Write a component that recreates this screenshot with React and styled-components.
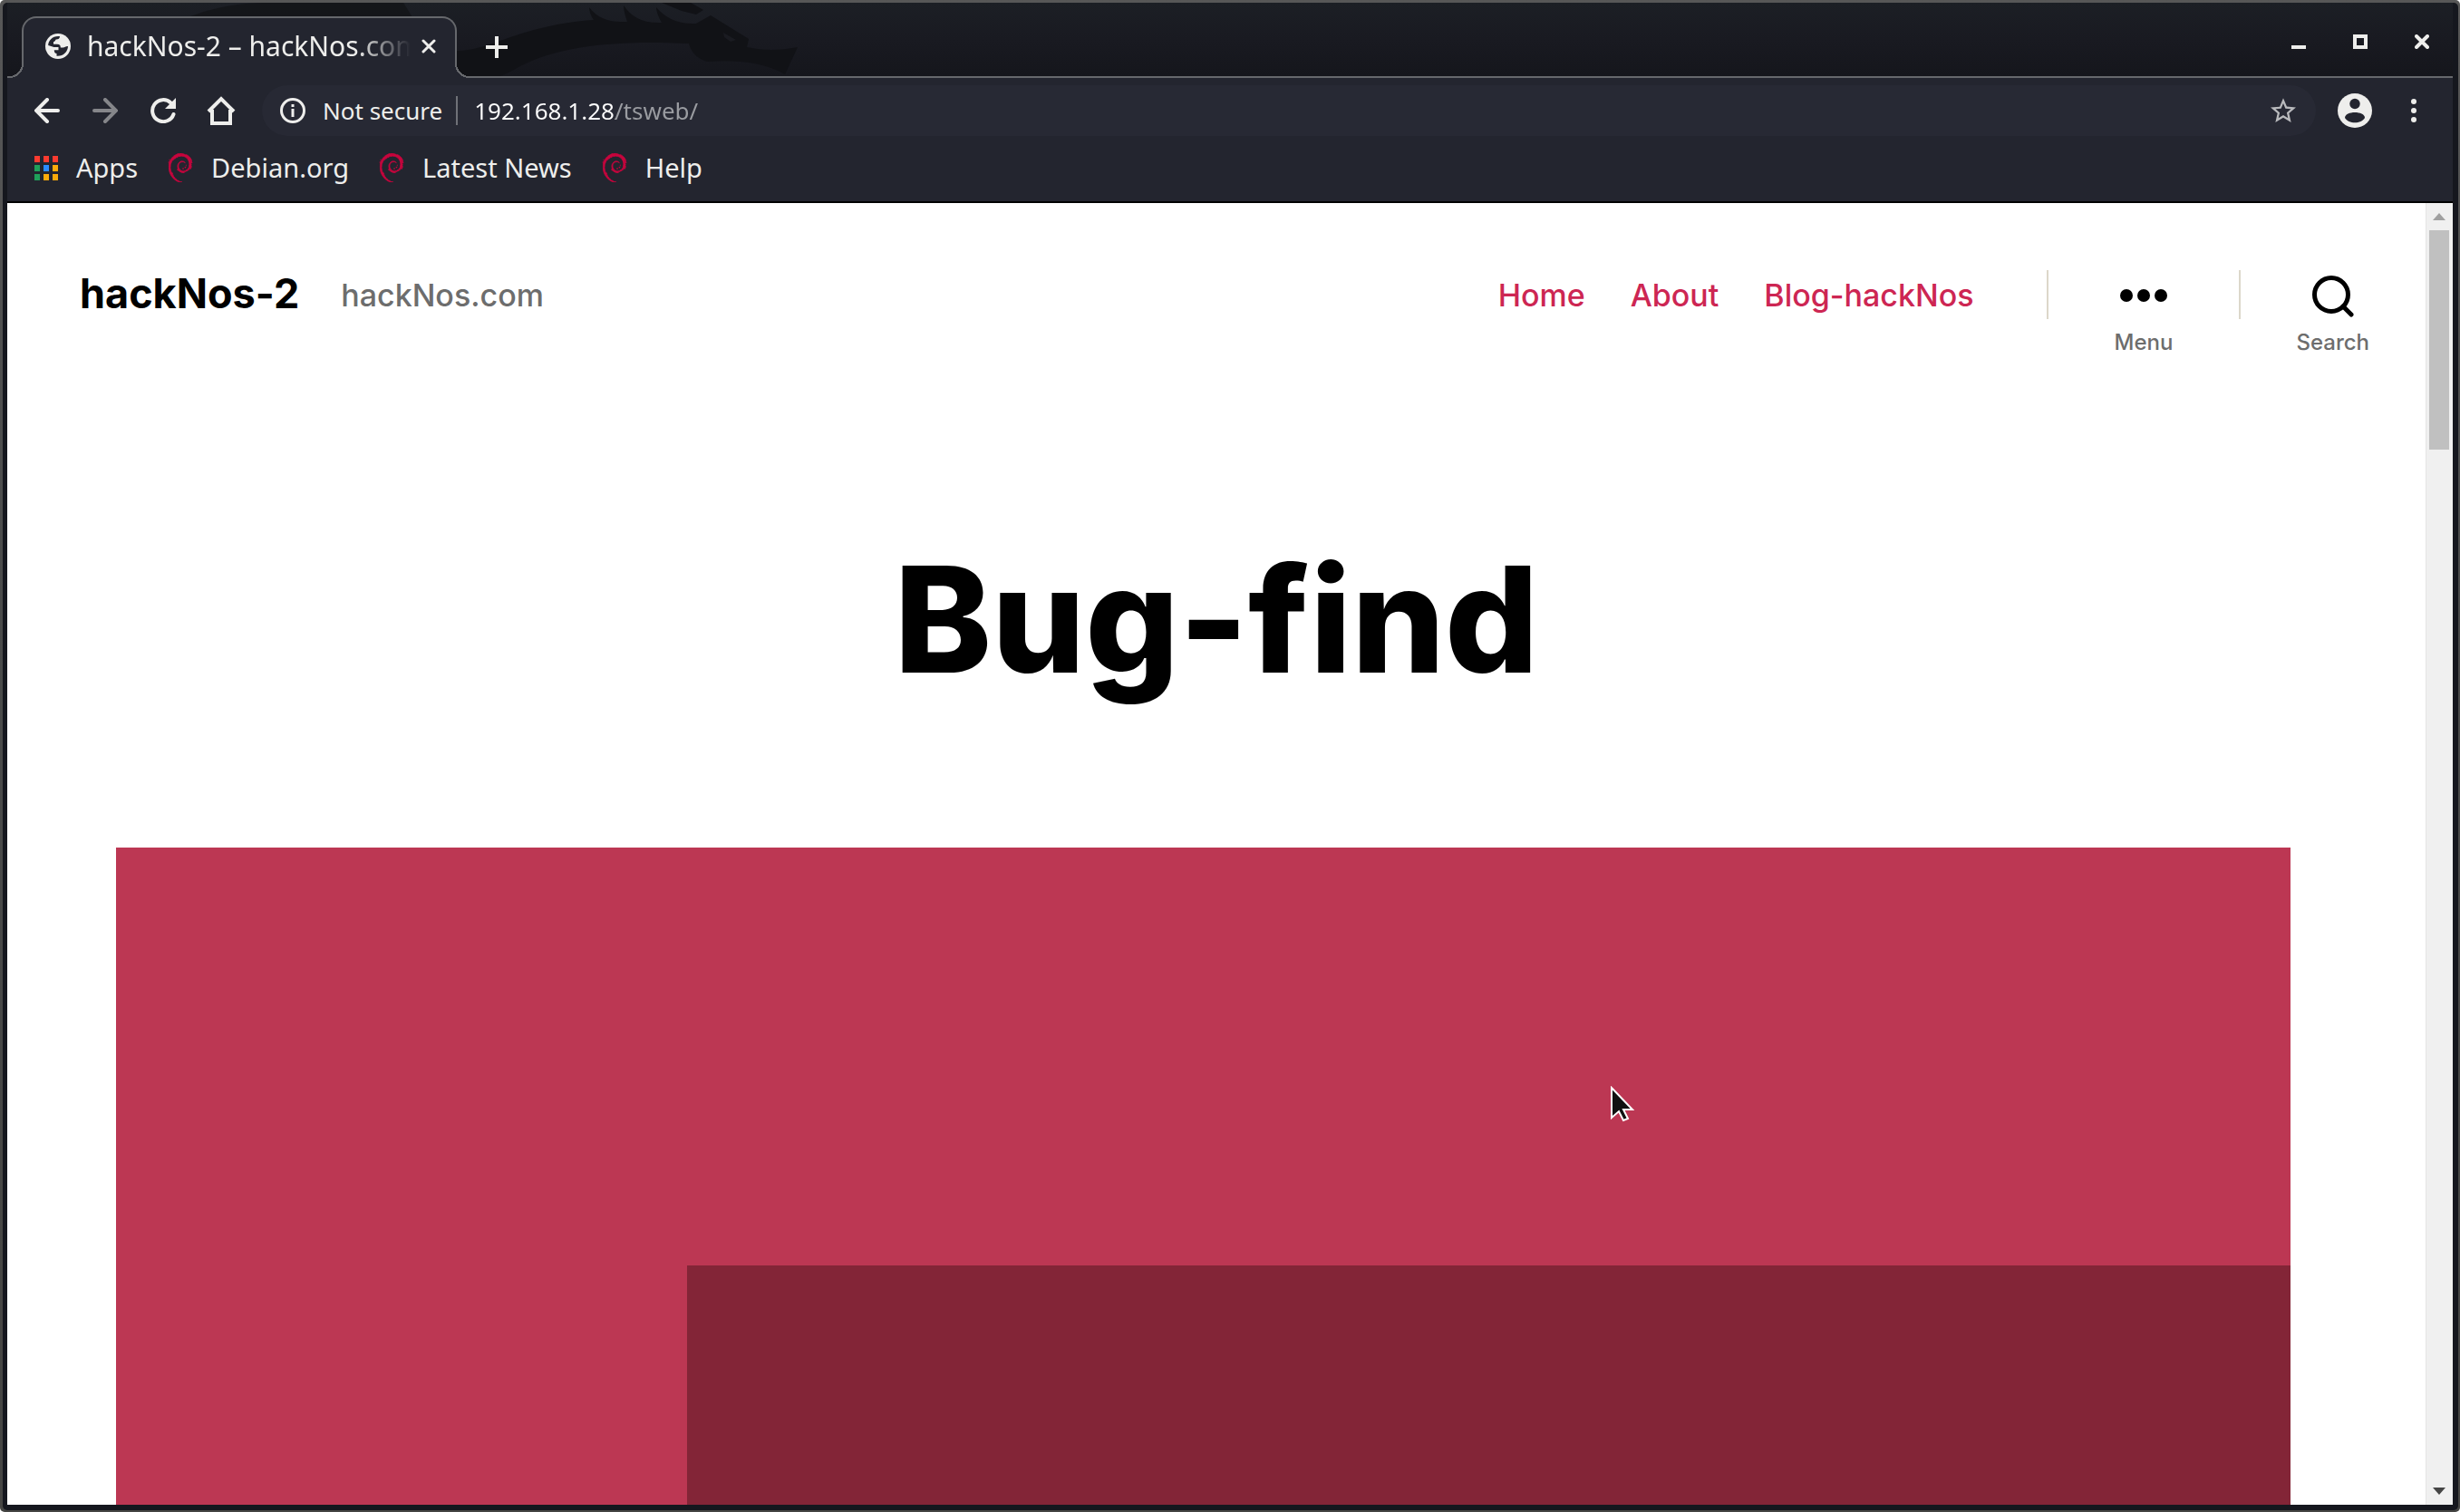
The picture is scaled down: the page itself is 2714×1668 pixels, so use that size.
import React from "react";
import styled, { createGlobalStyle, css } from "styled-components";
import { SiDebian } from "react-icons/si";

const chromeFont = `"Noto Sans", "Open Sans", sans-serif`;
const pageFont = `Inter, "Liberation Sans", sans-serif`;
const c = {
  toolbar: "#23252f",
  line: "#66686c",
  icon: "#eeeeec",
  accent: "#cd2653",
};

const GlobalStyle = createGlobalStyle`
  *, *::before, *::after { box-sizing: border-box; }
  body { margin: 0; background: #fff; }
  button, input { font: inherit; color: inherit; background: none; border: 0; padding: 0; margin: 0; }
  a { color: inherit; text-decoration: none; }
  svg { display: block; flex: none; }
`;

const Frame = styled.div`
  height: 100vh;
  padding: 3px 2px 2px 3px;
  border-radius: 5px;
  background: linear-gradient(#575757, #4a4b4b 40%, #454543);
`;

const Window = styled.div`
  height: 100%;
  display: flex;
  flex-direction: column;
  padding: 0 6px 6px 5px;
  border-radius: 5px;
  background: #15171e;
  font-family: ${chromeFont};
  color: ${c.icon};
`;

const TabStrip = styled.div`
  position: relative;
  flex: none;
  height: 83px;
  display: flex;
  align-items: flex-end;
  padding-left: 16px;
  background: linear-gradient(#1c1f25, #191a21 50%, #15161c);
  border-bottom: 2px solid ${c.line};
`;

const Dragon = styled.svg`
  position: absolute;
  left: 0;
  top: 0;
`;

const flare = css`
  content: "";
  position: absolute;
  bottom: 0;
  width: 16px;
  height: 16px;
`;

const Tab = styled.div`
  position: relative;
  width: 480px;
  height: 68px;
  margin-bottom: -2px;
  display: flex;
  align-items: center;
  padding: 0 21px 4px 24px;
  background: ${c.toolbar};
  border: 2px solid ${c.line};
  border-bottom: 0;
  border-radius: 16px 16px 0 0;
  &::before {
    ${flare}
    right: 100%;
    background: radial-gradient(circle at 0 0, transparent 14px, ${c.line} 14px 16px, ${c.toolbar} 16px);
  }
  &::after {
    ${flare}
    left: 100%;
    background: radial-gradient(circle at 100% 0, transparent 14px, ${c.line} 14px 16px, ${c.toolbar} 16px);
  }
`;

const TabTitle = styled.button`
  flex: 1;
  min-width: 0;
  display: flex;
  align-items: center;
  gap: 18px;
  font-size: 30px;
  line-height: 40px;
  text-align: left;
`;

const TabText = styled.span`
  flex: 1;
  min-width: 0;
  margin-right: 12px;
  white-space: nowrap;
  mask-image: linear-gradient(90deg, #000 calc(100% - 60px), transparent);
`;

const IconButton = styled.button`
  flex: none;
  width: ${(p) => p.$w || 32}px;
  height: 40px;
  display: flex;
  align-items: center;
  justify-content: center;
  color: ${(p) => (p.$dim ? "#85868a" : c.icon)};
`;

const NewTab = styled(IconButton)`
  position: relative;
  margin: 0 0 12px 28px;
`;

const WindowButtons = styled.div`
  position: relative;
  display: flex;
  gap: 36px;
  margin: 0 18px 18px auto;
`;

const Toolbar = styled.div`
  flex: none;
  height: 72px;
  display: flex;
  align-items: center;
  gap: 32px;
  padding: 0 29px 0 28px;
  background: ${c.toolbar};
`;

const AddressBar = styled.label`
  flex: 1;
  height: 56px;
  display: flex;
  align-items: center;
  margin: 0 -8px 0 -3px;
  padding: 0 20px;
  border-radius: 28px;
  background: #272934;
  font-size: 26px;
  line-height: 36px;
`;

const Security = styled.span`
  padding: 0 15px 0 19px;
  border-right: 2px solid #6f7178;
  line-height: 32px;
`;

const Address = styled.input`
  flex: 1;
  min-width: 0;
  height: 40px;
  margin-left: 18px;
  outline: 0;
  background: linear-gradient(90deg, #ffffff 156px, #9a9ca1 156px);
  background-clip: text;
  -webkit-text-fill-color: transparent;
`;

const Bookmarks = styled.nav`
  flex: none;
  height: 66px;
  display: flex;
  align-items: flex-start;
  gap: 31px;
  padding: 7px 28px 0;
  background: ${c.toolbar};
  border-bottom: 2px solid #000;
  font-size: 29px;
  line-height: 40px;
`;

const Bookmark = styled.a`
  display: flex;
  align-items: center;
  gap: 18px;
`;

const AppsGrid = styled.span`
  display: grid;
  grid-template-columns: repeat(3, 6px);
  grid-auto-rows: 7px;
  gap: 3px 4px;
  margin: 0 2px;
`;

const AppDot = styled.span`
  background: ${(p) => p.$color};
`;

const Viewport = styled.div`
  flex: 1;
  min-height: 0;
  display: flex;
  background: #fff;
  color: #000;
  font-family: ${pageFont};
`;

const Page = styled.div`
  flex: 1;
  min-width: 0;
  display: flex;
  flex-direction: column;
  overflow: hidden;
`;

const Header = styled.header`
  flex: none;
  display: flex;
  align-items: flex-start;
  padding: 72px 62px 0 80px;
`;

const SiteTitle = styled.a`
  font-size: 45px;
  line-height: 56px;
  font-weight: 700;
`;

const Tagline = styled.div`
  margin-left: 46px;
  font-size: 34px;
  line-height: 60px;
  font-weight: 500;
  color: #6d6d6d;
`;

const Menu = styled.nav`
  display: flex;
  gap: 50px;
  margin: 0 80px 0 auto;
  font-size: 34px;
  line-height: 60px;
  font-weight: 500;
  color: ${c.accent};
`;

const Divider = styled.span`
  width: 2px;
  height: 54px;
  margin-top: 2px;
  background: #dcd7ca;
`;

const Toggle = styled.button`
  display: flex;
  flex-direction: column;
  align-items: center;
  gap: 14px;
  padding: 8px 0 0;
  margin-left: ${(p) => p.$space}px;
  margin-right: ${(p) => (p.$last ? 0 : p.$space)}px;
  font-size: 24px;
  line-height: 28px;
  font-weight: 500;
  color: #6d6d6d;
`;

const Article = styled.main`
  flex: 1;
  min-height: 0;
  display: flex;
  flex-direction: column;
`;

const Title = styled.h1`
  margin: 189px 0 150px;
  text-align: center;
  font-size: 162px;
  line-height: 204px;
  font-weight: 800;
`;

const Hero = styled.div`
  position: relative;
  flex: 1;
  display: flex;
  justify-content: flex-end;
  margin: 0 149px 0 120px;
  padding-top: 461px;
  background: #bc3753;
`;

const HeroShade = styled.div`
  width: 73.75%;
  background: #832537;
`;

const Pointer = styled.svg`
  position: absolute;
  left: 1648px;
  top: 263px;
`;

const Scrollbar = styled.div`
  flex: none;
  width: 30px;
  display: flex;
  flex-direction: column;
  align-items: center;
  padding-right: 1px;
  background: #f0f0f0;
  border-left: 1px solid #e4e4e4;
`;

const ScrollArrow = styled.button`
  width: 100%;
  height: 30px;
  display: flex;
  align-items: center;
  justify-content: center;
  color: ${(p) => (p.$off ? "#a0a0a0" : "#454545")};
`;

const Track = styled.div`
  flex: 1;
  width: 22px;
`;

const Thumb = styled.div`
  height: 17.6%;
  background: #c0c0c0;
`;

const appColors = ["#fb3b30", "#fb3b30", "#fb3b30", "#1fa05a", "#2b8cff", "#fbab0a", "#1fa05a", "#fbab0a", "#fbab0a"];
const bookmarks = ["Debian.org", "Latest News", "Help"];
const links = ["Home", "About", "Blog-hackNos"];

const Stroke = ({ w = 28, h = w, sw = 4, cap = "butt", d, children }) => (
  <svg width={w} height={h} viewBox={`0 0 ${w} ${h}`} fill="none" stroke="currentColor" strokeWidth={sw} strokeLinecap={cap}>
    {d && <path d={d} />}
    {children}
  </svg>
);

const Globe = () => (
  <svg width="28" height="28" viewBox="0 0 28 28">
    <circle cx="14" cy="14" r="14" fill={c.icon} />
    <path
      d="M16 3 C16 5.500 14.500 6.500 12 6.500 C11 6.500 11.200 9 9 9 L9 11.800 L13 11.800 C16 11.800 16.800 13 16.800 15.500 L19.500 15.500 C21.500 15.500 22.500 13.800 25 14 C25 20 19.500 25.500 12.500 24.800 L12.500 22 C10.500 22 9.800 20.500 9.800 18.300 L14.500 18.300 L14.500 15 L9.500 15 L3.200 13 C3 7.500 8.500 2 16 3 Z"
      fill={c.toolbar}
    />
  </svg>
);

export default function App() {
  return (
    <>
      <GlobalStyle />
      <Frame>
        <Window>
          <TabStrip>
            <Dragon width="900" height="81" viewBox="8 3 900 81" fill="#111216" aria-hidden="true">
              <path d="M205 20 C235 8 260 4 290 3 L445 3 L455 19 Z" opacity=".7" />
              <path d="M500 56 C540 58 570 28 655 22 C652 18 650 12 650 8 C658 18 668 25 692 24 C690 18 688 12 688 6 C696 18 708 26 730 25 C726 18 724 12 724 8 C734 20 748 27 768 26 L784 17 L826 43 L824 52 C842 56 860 56 880 52 L866 82 C842 68 812 66 780 68 C768 64 762 56 760 48 C680 44 610 50 565 78 L552 84 L500 84 Z" />
              <path d="M730 3 L762 3 L776 11 L768 16 L752 12 Z" />
              <path d="M798 36 L812 44 L806 46 L799 41 Z" fill="#1a1b21" />
            </Dragon>
            <Tab>
              <TabTitle role="tab" aria-selected="true">
                <Globe />
                <TabText>hackNos-2 – hackNos.com</TabText>
              </TabTitle>
              <IconButton $w={16} aria-label="Close tab">
                <Stroke w={16} sw={3} cap="round" d="M2 2 L14 14 M14 2 L2 14" />
              </IconButton>
            </Tab>
            <NewTab aria-label="New tab">
              <Stroke w={24} d="M12 0 V24 M0 12 H24" />
            </NewTab>
            <WindowButtons>
              <IconButton aria-label="Minimize">
                <Stroke w={16} d="M0 14 H16" />
              </IconButton>
              <IconButton aria-label="Maximize">
                <Stroke w={16} d="M2 2 H14 V14 H2 Z" />
              </IconButton>
              <IconButton aria-label="Close">
                <Stroke w={16} cap="round" d="M2 2 L14 14 M14 2 L2 14" />
              </IconButton>
            </WindowButtons>
          </TabStrip>

          <Toolbar>
            <IconButton aria-label="Back">
              <Stroke cap="round" d="M26 14 H3 M14 2 L2 14 L14 26" />
            </IconButton>
            <IconButton $dim aria-label="Forward">
              <Stroke cap="round" d="M2 14 H25 M14 2 L26 14 L14 26" />
            </IconButton>
            <IconButton aria-label="Reload">
              <Stroke cap="round" d="M25.500 18 A12 12 0 1 1 22.500 5.500">
                <path d="M28 0 V12 H16 Z" fill="currentColor" stroke="none" />
              </Stroke>
            </IconButton>
            <IconButton aria-label="Home">
              <Stroke w={32} d="M2 17 L16 3 L30 17 M6 15 V30 H26 V15" />
            </IconButton>
            <AddressBar>
              <Stroke sw={3}>
                <circle cx="14" cy="14" r="12.500" />
                <path d="M14 12 V21 M14 7 V10" />
              </Stroke>
              <Security>Not secure</Security>
              <Address aria-label="Address" defaultValue="192.168.1.28/tsweb/" />
              <IconButton $w={32} aria-label="Bookmark this page">
                <svg width="28" height="28" viewBox="2 2 20 19.500" fill="#b9babd">
                  <path d="M22 9.240l-7.190-.62L12 2 9.190 8.630 2 9.240l5.460 4.730L5.820 21 12 17.270 18.180 21l-1.630-7.030L22 9.240zM12 15.400l-3.760 2.270 1-4.280-3.320-2.880 4.380-.38L12 6.100l1.710 4.040 4.380.38-3.320 2.880 1 4.280L12 15.400z" />
                </svg>
              </IconButton>
            </AddressBar>
            <IconButton $w={38} aria-label="Profile">
              <svg width="38" height="38" viewBox="0 0 38 38">
                <circle cx="19" cy="19" r="19" fill={c.icon} />
                <circle cx="19" cy="11.500" r="5.700" fill={c.toolbar} />
                <path d="M8 27 C8 19 30 19 30 27 C26 34 12 34 8 27 Z" fill={c.toolbar} />
              </svg>
            </IconButton>
            <IconButton $w={28} aria-label="Customize">
              <svg width="6" height="28" viewBox="0 0 6 28" fill="currentColor">
                <circle cx="3" cy="4" r="3" />
                <circle cx="3" cy="14" r="3" />
                <circle cx="3" cy="24" r="3" />
              </svg>
            </IconButton>
          </Toolbar>

          <Bookmarks aria-label="Bookmarks">
            <Bookmark href="#apps">
              <AppsGrid>
                {appColors.map((color, i) => (
                  <AppDot key={i} $color={color} />
                ))}
              </AppsGrid>
              Apps
            </Bookmark>
            {bookmarks.map((name) => (
              <Bookmark key={name} href={`#${name}`}>
                <SiDebian size={32} color="#c7053d" strokeWidth={0.6} />
                {name}
              </Bookmark>
            ))}
          </Bookmarks>

          <Viewport>
            <Page>
              <Header>
                <SiteTitle href="#home">hackNos-2</SiteTitle>
                <Tagline>hackNos.com</Tagline>
                <Menu aria-label="Main">
                  {links.map((name) => (
                    <a key={name} href={`#${name}`}>
                      {name}
                    </a>
                  ))}
                </Menu>
                <Divider />
                <Toggle $space={73}>
                  <svg width="52" height="46" viewBox="0 0 52 46" fill="#000">
                    <circle cx="7" cy="22" r="7" />
                    <circle cx="26" cy="22" r="7" />
                    <circle cx="45" cy="22" r="7" />
                  </svg>
                  Menu
                </Toggle>
                <Divider />
                <Toggle $space={61} $last>
                  <svg width="46" height="46" viewBox="0 0 46 46" fill="none" stroke="#000" strokeWidth="5">
                    <circle cx="21" cy="21" r="18.500" />
                    <path d="M34 34 L43 43" strokeLinecap="round" />
                  </svg>
                  Search
                </Toggle>
              </Header>
              <Article>
                <Title>Bug-find</Title>
                <Hero>
                  <HeroShade />
                  <Pointer width="30" height="42" viewBox="0 0 30 42" aria-hidden="true">
                    <path d="M2 2 V35 L10 28 L15 38 L20 36 L15 26 L25 26 Z" fill="#111" stroke="#fff" strokeWidth="2" />
                  </Pointer>
                </Hero>
              </Article>
            </Page>
            <Scrollbar>
              <ScrollArrow $off aria-label="Scroll up">
                <svg width="14" height="8" viewBox="0 0 14 8" fill="currentColor">
                  <path d="M0 8 L7 0 L14 8 Z" />
                </svg>
              </ScrollArrow>
              <Track>
                <Thumb />
              </Track>
              <ScrollArrow aria-label="Scroll down">
                <svg width="14" height="8" viewBox="0 0 14 8" fill="currentColor">
                  <path d="M0 0 L7 8 L14 0 Z" />
                </svg>
              </ScrollArrow>
            </Scrollbar>
          </Viewport>
        </Window>
      </Frame>
    </>
  );
}
